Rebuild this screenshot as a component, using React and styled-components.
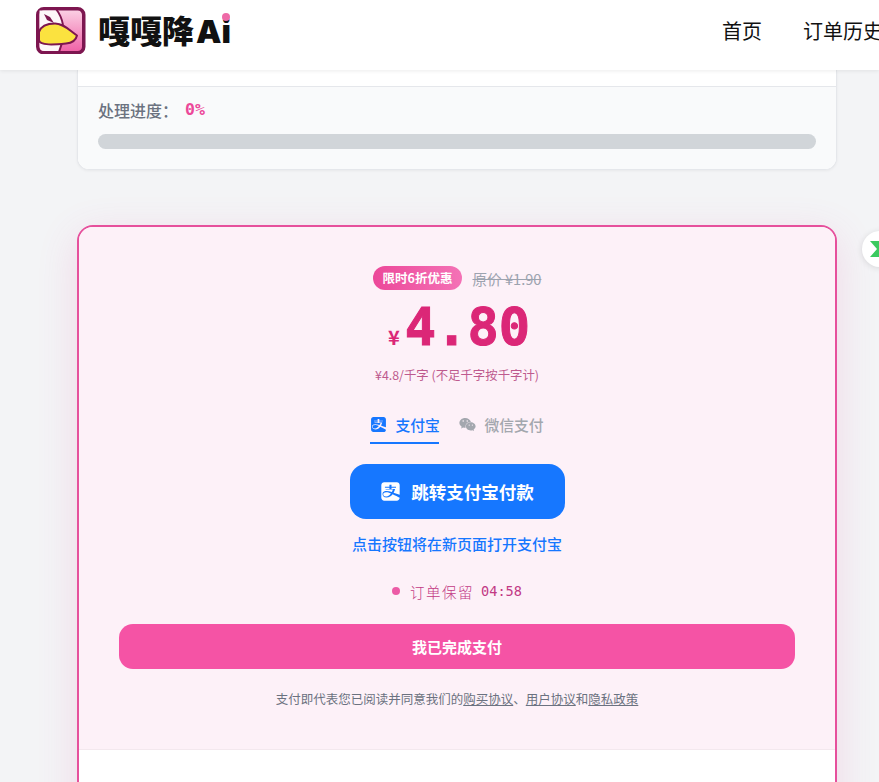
import React from 'react';
import styled, { createGlobalStyle } from 'styled-components';
import { FaAlipay, FaWeixin } from 'react-icons/fa';

const CJK = '"Noto Sans CJK SC", "Noto Sans", sans-serif';
const MONO = '"DejaVu Sans Mono", "Liberation Mono", monospace';

const Global = createGlobalStyle`
  html, body { margin: 0; padding: 0; height: 782px; overflow: hidden; background: #f3f4f6; }
  * { box-sizing: border-box; }
  body { font-family: "Inter", ${CJK}; }
`;

const Page = styled.div`
  position: relative;
  width: 879px;
  height: 782px;
  overflow: hidden;
`;

const Header = styled.header`
  height: 70px;
  background: #fff;
  box-shadow: 0 1px 4px rgba(0, 0, 0, 0.08);
  display: flex;
  align-items: center;
  padding: 0 0 9px 36px;
  position: relative;
  z-index: 2;
`;

const Brand = styled.div`
  display: flex;
  align-items: center;
  gap: 12px;
  margin-right: auto;
`;

const BrandName = styled.span`
  font-family: ${CJK};
  font-weight: 900;
  font-size: 32px;
  line-height: 1;
  color: #111;
  position: relative;
  white-space: nowrap;
`;

const BrandLatin = styled.span`
  font-family: "Inter", sans-serif;
  font-weight: 900;
  font-size: 32px;
  margin-left: 2px;
`;

const BrandDot = styled.i`
  position: absolute;
  width: 8px;
  height: 8px;
  border-radius: 50%;
  background: #ee6aa7;
  right: 1px;
  top: 0;
`;

const Nav = styled.nav`
  display: flex;
  gap: 41px;
  flex: none;
  width: 157px;
  white-space: nowrap;
`;

const NavLink = styled.a`
  font-family: ${CJK};
  font-size: 20px;
  color: #111;
`;

const Main = styled.main`
  width: 760px;
  margin-left: 77px;
`;

const ProgressCard = styled.section`
  height: 100px;
  background: #fff;
  border: 1px solid #e5e7eb;
  border-top: 0;
  border-radius: 0 0 12px 12px;
  padding-top: 16px;
  box-shadow: 0 1px 3px rgba(0, 0, 0, 0.05);
  overflow: hidden;
`;

const ProgressBody = styled.div`
  height: 84px;
  background: #f9fafb;
  border-top: 1px solid #e5e7eb;
  padding: 12px 20px 0;
`;

const ProgressLabel = styled.div`
  display: flex;
  align-items: center;
  height: 21px;
  font-family: ${CJK};
  font-size: 16px;
  font-weight: 500;
  color: #6b7280;
`;

const ProgressValue = styled.span`
  font-family: ${MONO};
  font-weight: 700;
  font-size: 16.5px;
  margin-left: 7px;
  color: #ec4899;
`;

const Track = styled.div`
  height: 15px;
  margin-top: 14px;
  border-radius: 8px;
  background: #d1d5d9;
`;

const PayCard = styled.section`
  margin-top: 55px;
  height: 640px;
  background: #fff;
  border: 2px solid #e6509c;
  border-radius: 16px;
  box-shadow: 0 10px 40px rgba(236, 72, 153, 0.16);
  overflow: hidden;
`;

const PayBody = styled.div`
  height: 523px;
  background: #fdf1f8;
  border-bottom: 1px solid #f3e8ee;
  padding: 39px 40px 0;
  display: flex;
  flex-direction: column;
  align-items: center;
`;

const OfferRow = styled.div`
  display: flex;
  align-items: center;
  gap: 10px;
  height: 24px;
`;

const OfferBadge = styled.span`
  height: 24px;
  padding: 0 10px;
  border-radius: 12px;
  background: linear-gradient(90deg, #ec4899, #f472b6);
  color: #fff;
  font-family: ${CJK};
  font-size: 12.5px;
  font-weight: 700;
  line-height: 24px;
`;

const OldPrice = styled.span`
  font-family: ${CJK};
  font-size: 14.6px;
  color: #9ca3af;
  text-decoration: line-through;
`;

const PriceRow = styled.div`
  display: flex;
  align-items: baseline;
  justify-content: center;
  gap: 5px;
  height: 62px;
  margin: 7px 0 0 4px;
  color: #db2777;
`;

const Currency = styled.span`
  font-family: ${CJK};
  font-size: 20px;
  font-weight: 700;
`;

const Amount = styled.span`
  font-family: ${MONO};
  font-size: 52px;
  font-weight: 700;
  line-height: 60px;
  -webkit-text-stroke: 1px #db2777;
`;

const UnitPrice = styled.div`
  margin-top: 7px;
  font-family: ${CJK};
  font-size: 12.4px;
  line-height: 18px;
  color: #be5a8e;
`;

const Tabs = styled.div`
  display: flex;
  margin-top: 27px;
  gap: 20px;
  height: 33px;
`;

const Tab = styled.div`
  display: flex;
  align-items: flex-start;
  gap: 8px;
  height: 33px;
  width: ${p => (p.$active ? '69px' : 'auto')};
  padding-top: 5px;
  font-family: ${CJK};
  font-size: 14.8px;
  line-height: 18px;
  font-weight: 500;
  white-space: nowrap;
  color: ${p => (p.$active ? '#1677ff' : '#a3a7ae')};
  border-bottom: 2px solid ${p => (p.$active ? '#1677ff' : 'transparent')};
  svg { width: 17px; height: 17px; flex: none; }
`;

const AlipayButton = styled.button`
  margin-top: 20px;
  width: 215px;
  height: 55px;
  border: 0;
  border-radius: 16px;
  background: #1677ff;
  color: #fff;
  display: flex;
  align-items: center;
  justify-content: center;
  gap: 10px;
  font-family: ${CJK};
  font-size: 17.5px;
  font-weight: 700;
  svg { width: 21px; height: 21px; }
`;

const Hint = styled.div`
  margin-top: 15px;
  font-family: ${CJK};
  font-size: 15px;
  line-height: 20px;
  font-weight: 500;
  color: #1677ff;
`;

const Timer = styled.div`
  margin-top: 27px;
  display: flex;
  align-items: center;
  height: 20px;
  font-family: ${MONO};
  font-size: 13.6px;
  color: #c23a85;
`;

const TimerDot = styled.i`
  width: 8px;
  height: 8px;
  border-radius: 50%;
  background: #ec5ba6;
  margin-right: 10px;
`;

const TimerLabel = styled.span`
  font-family: ${CJK};
  font-size: 14.5px;
  font-weight: 300;
  letter-spacing: 1.5px;
  margin-right: 7px;
`;

const ConfirmButton = styled.button`
  margin-top: 23px;
  width: 100%;
  height: 45px;
  border: 0;
  border-radius: 14px;
  background: #f553a5;
  color: #fff;
  font-family: ${CJK};
  font-size: 15px;
  font-weight: 700;
`;

const Legal = styled.div`
  margin-top: 21px;
  font-family: ${CJK};
  font-size: 12.5px;
  line-height: 18px;
  color: #6b7280;
  a { color: #6b7280; text-decoration: underline; }
`;

const FloatButton = styled.div`
  position: absolute;
  left: 862px;
  top: 231px;
  width: 36px;
  height: 36px;
  border-radius: 50%;
  background: #fff;
  box-shadow: 0 1px 6px rgba(0, 0, 0, 0.12);
  display: flex;
  align-items: center;
  justify-content: center;
  z-index: 3;
`;

const Logo = () => (
  <svg width="50" height="47" viewBox="0 0 50 47">
    <defs>
      <linearGradient id="lg" x1="0" y1="0" x2="0" y2="1">
        <stop offset="0" stopColor="#fbd3e6" />
        <stop offset="1" stopColor="#ef5fa5" />
      </linearGradient>
    </defs>
    <rect x="1.75" y="1.75" width="46" height="44" rx="6" fill="url(#lg)" stroke="#7d1650" strokeWidth="3.5" />
    <path d="M3.5 3.5 H21 C25 8 26 13 27 18 L3.5 22 Z" fill="#fdf6f9" />
    <path d="M3.5 36 H25 L23 44 H8 C5 44 3.5 42 3.5 39 Z" fill="#fdf6f9" />
    <path d="M20 2 C24 7 26 12 27 18 M26 36 L23 45" stroke="#7d1650" strokeWidth="2" fill="none" />
    <path d="M8 7 L14 10 L18 16 L11 13 Z" fill="#7d1650" />
    <path d="M3 25 C5 19 12 16.5 19 16.5 C28 16.5 34 24 41 28.5 C40 33 36 36 30 36.5 C20 37.5 3 39 3 33 Z" fill="#fbe23f" stroke="#7d1650" strokeWidth="2" strokeLinejoin="round" />
  </svg>
);

const FloatIcon = () => (
  <svg width="20" height="20" viewBox="0 0 20 20">
    <path d="M0 2 H20 L13 10 L20 18 H0 L7 10 Z" fill="#3bc95f" />
    <path d="M9 2 H11 L10 7 Z" fill="#fff" />
  </svg>
);

export default function App() {
  return (
    <Page>
      <Global />
      <Header>
        <Brand>
          <Logo />
          <BrandName>嘎嘎降<BrandLatin>Ai</BrandLatin><BrandDot /></BrandName>
        </Brand>
        <Nav>
          <NavLink>首页</NavLink>
          <NavLink>订单历史</NavLink>
        </Nav>
      </Header>
      <Main>
        <ProgressCard>
          <ProgressBody>
            <ProgressLabel>处理进度：<ProgressValue>0%</ProgressValue></ProgressLabel>
            <Track />
          </ProgressBody>
        </ProgressCard>
        <PayCard>
          <PayBody>
            <OfferRow>
              <OfferBadge>限时6折优惠</OfferBadge>
              <OldPrice>原价 ¥1.90</OldPrice>
            </OfferRow>
            <PriceRow>
              <Currency>¥</Currency>
              <Amount>4.80</Amount>
            </PriceRow>
            <UnitPrice>¥4.8/千字 (不足千字按千字计)</UnitPrice>
            <Tabs>
              <Tab $active><FaAlipay />支付宝</Tab>
              <Tab><FaWeixin />微信支付</Tab>
            </Tabs>
            <AlipayButton><FaAlipay />跳转支付宝付款</AlipayButton>
            <Hint>点击按钮将在新页面打开支付宝</Hint>
            <Timer><TimerDot /><TimerLabel>订单保留</TimerLabel>04:58</Timer>
            <ConfirmButton>我已完成支付</ConfirmButton>
            <Legal>支付即代表您已阅读并同意我们的<a>购买协议</a>、<a>用户协议</a>和<a>隐私政策</a></Legal>
          </PayBody>
        </PayCard>
      </Main>
      <FloatButton><FloatIcon /></FloatButton>
    </Page>
  );
}
